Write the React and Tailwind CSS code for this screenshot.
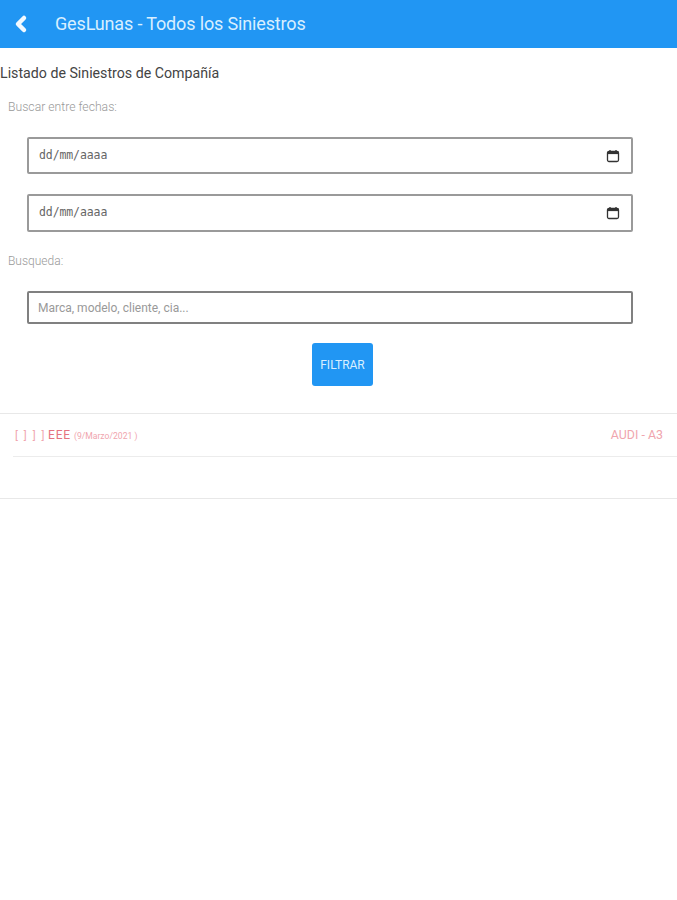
import { ChevronLeft } from "lucide-react"

const CalendarIcon = () => (
  <svg width="14" height="14" viewBox="0 0 14 14" fill="none" className="shrink-0">
    <rect x="1.5" y="2.5" width="11" height="10" rx="1.5" stroke="#333" strokeWidth="1.3" />
    <rect x="1.5" y="2.5" width="11" height="2.6" fill="#333" />
    <path d="M4 1v2M10 1v2" stroke="#333" strokeWidth="1.3" />
  </svg>
)

const DateField = ({ className }) => (
  <div className={`flex items-center justify-between ml-[27px] mr-[44px] pl-[10px] pr-[11px] bg-white border-2 border-[#9a9a9a] rounded-[2px] ${className}`}>
    <span className="text-[11.5px] text-[#666] font-['DejaVu_Sans_Mono',monospace] tracking-[-0.1px]">dd/mm/aaaa</span>
    <CalendarIcon />
  </div>
)

const App = () => {
  return (
    <div className="min-h-[900px] bg-white font-['Roboto',sans-serif]">
      <header className="h-[48px] bg-[#2196f3] flex items-center pl-[9px]">
        <ChevronLeft className="w-[24px] h-[28px] text-[#f2f9ff]" strokeWidth={4.5} />
        <h1 className="ml-[22px] mb-[2px] text-[18px] tracking-[-0.15px] text-[#d8efff] font-normal">GesLunas - Todos los Siniestros</h1>
      </header>

      <h2 className="mt-[16px] text-[14.2px] leading-[18px] text-[#444]">Listado de Siniestros de Compañía</h2>
      <p className="mt-[17px] ml-[8px] text-[12.2px] leading-[16px] font-light text-[#999]">Buscar entre fechas:</p>

      <DateField className="mt-[22px] h-[37px]" />
      <DateField className="mt-[20px] h-[38px]" />

      <p className="mt-[21px] ml-[8px] text-[12px] leading-[16px] font-light text-[#999]">Busqueda:</p>

      <div className="mt-[22px] ml-[27px] mr-[44px] h-[33px] flex items-center pl-[9px] bg-white border-2 border-[#808080] rounded-[2px]">
        <span className="text-[12px] text-[#999]">Marca, modelo, cliente, cia...</span>
      </div>

      <div className="mt-[19px] flex justify-center pl-[8px]">
        <button className="w-[61px] h-[43px] bg-[#2196f3] rounded-[3px] text-[12px] text-[#d8efff]">FILTRAR</button>
      </div>

      <div className="mt-[27px] border-t border-[#e8e8e8]">
        <div className="ml-[13px] h-[43px] border-b border-[#ececec] flex items-center justify-between pl-[2px] pr-[14px]">
          <span className="text-[#f0a5ae] flex items-baseline">
            <span className="text-[11px] tracking-[1.6px]">[ ] ] ]</span>
            <span className="ml-[2px] text-[12px] text-[#e57380] tracking-[0.8px]">EEE</span>
            <span className="ml-[3px] text-[8.6px]">(9/Marzo/2021 )</span>
          </span>
          <span className="text-[12.4px] text-[#f0a5ae]">AUDI - A3</span>
        </div>
        <div className="h-[42px] border-b border-[#e8e8e8]" />
      </div>
    </div>
  )
}

export default App
